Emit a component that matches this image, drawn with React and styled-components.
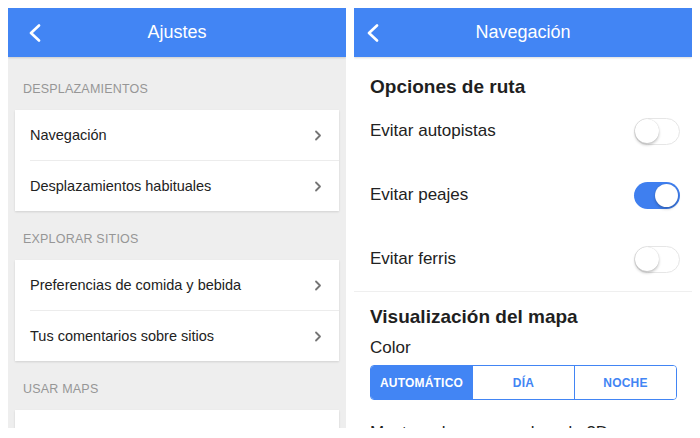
import React from "react"
import styled, { createGlobalStyle } from "styled-components"

const GlobalStyle = createGlobalStyle`
    html, body {
        margin: 0;
        padding: 0;
        background: #ffffff;
        font-family: "Liberation Sans", Arial, sans-serif;
    }
`

const Page = styled.div`
    display: flex;
    gap: 8px;
    padding: 8px;
    width: 700px;
    height: 438px;
    box-sizing: border-box;
`

const Panel = styled.div`
    flex: 1;
    height: 420px;
    display: flex;
    flex-direction: column;
    overflow: hidden;
    background: ${(props) => props.bg};
`

const Header = styled.div`
    position: relative;
    height: 49px;
    flex-shrink: 0;
    background: #4285f4;
    display: flex;
    align-items: center;
    justify-content: center;
    color: #ffffff;
    font-size: 18px;
    box-shadow: 0 1px 2px rgba(0, 0, 0, 0.15);
    z-index: 1;
`

const BackButton = styled.svg`
    position: absolute;
    left: ${(props) => props.left}px;
    top: 16px;
`

const SectionLabel = styled.div`
    padding: ${(props) => (props.first ? "24px" : "20px")} 15px 13px;
    font-size: 12.5px;
    line-height: 16px;
    letter-spacing: 0.2px;
    color: #969696;
`

const Card = styled.div`
    margin: 0 7px;
    background: #ffffff;
    box-shadow: 0 1px 2px rgba(0, 0, 0, 0.12);
    flex-shrink: 0;
`

const CardRow = styled.div`
    height: 50px;
    display: flex;
    align-items: center;
    justify-content: space-between;
    padding: 0 17px 0 15px;
    font-size: 14.5px;
    color: #222222;
    border-top: ${(props) => (props.divider ? "1px solid #ececec" : "none")};
    margin-left: ${(props) => (props.divider ? "15px" : "0")};
    padding-left: ${(props) => (props.divider ? "0" : "15px")};
`

const Content = styled.div`
    display: flex;
    flex-direction: column;
`

const GroupTitle = styled.div`
    padding: ${(props) => props.pad} 16px 0;
    font-size: 19px;
    line-height: 24px;
    font-weight: bold;
    color: #1f1f1f;
`

const SwitchRow = styled.div`
    height: 64px;
    display: flex;
    align-items: center;
    justify-content: space-between;
    padding: 0 12px 0 16px;
    font-size: 17px;
    color: #222222;
`

const Track = styled.div`
    position: relative;
    width: 46px;
    height: 27px;
    border-radius: 14px;
    box-sizing: border-box;
    background: ${(props) => (props.on ? "#3f7fef" : "#ffffff")};
    border: ${(props) => (props.on ? "none" : "1.5px solid #e6e6e6")};
`

const Knob = styled.div`
    position: absolute;
    top: ${(props) => (props.on ? "2px" : "0")};
    left: ${(props) => (props.on ? "21px" : "0")};
    width: ${(props) => (props.on ? "23px" : "24px")};
    height: ${(props) => (props.on ? "23px" : "24px")};
    border-radius: 50%;
    background: #ffffff;
    box-shadow: 0 2px 3px rgba(0, 0, 0, 0.22), 0 0 1px rgba(0, 0, 0, 0.2);
`

const Divider = styled.div`
    height: 1px;
    background: #efefef;
`

const Label = styled.div`
    padding: ${(props) => props.pad} 16px 0;
    font-size: 17px;
    line-height: 22px;
    color: #222222;
`

const Segmented = styled.div`
    display: flex;
    margin: 6px 15px 0 16px;
    height: 35px;
    border: 1px solid #4285f4;
    border-radius: 4px;
    overflow: hidden;
    box-sizing: border-box;
`

const Segment = styled.div`
    flex: 1;
    display: flex;
    align-items: center;
    justify-content: center;
    font-size: 12px;
    font-weight: bold;
    letter-spacing: 0.2px;
    color: ${(props) => (props.active ? "#ffffff" : "#4285f4")};
    background: ${(props) => (props.active ? "#4285f4" : "#ffffff")};
    & + & {
        border-left: 1px solid #4285f4;
    }
`

const Back = ({ left }) => (
    <BackButton left={left} width="14" height="18" viewBox="0 0 14 18">
        <path d="M11 1.5 L3 9 L11 16.5" fill="none" stroke="#ffffff" strokeWidth="2.6" strokeLinecap="round" strokeLinejoin="round" />
    </BackButton>
)

const Chevron = () => (
    <svg width="8" height="11" viewBox="0 0 8 11">
        <path d="M2 1.5 L6 5.5 L2 9.5" fill="none" stroke="#757575" strokeWidth="1.8" strokeLinecap="round" strokeLinejoin="round" />
    </svg>
)

const Switch = ({ on }) => (
    <Track on={on}>
        <Knob on={on} />
    </Track>
)

const sections = [
    { title: "DESPLAZAMIENTOS", items: ["Navegación", "Desplazamientos habituales"] },
    { title: "EXPLORAR SITIOS", items: ["Preferencias de comida y bebida", "Tus comentarios sobre sitios"] },
    { title: "USAR MAPS", items: ["Unidades de distancia", "Mostrar escala en el mapa"] },
]

const routeOptions = [
    { label: "Evitar autopistas", on: false },
    { label: "Evitar peajes", on: true },
    { label: "Evitar ferris", on: false },
]

const App = () => {
    return (
        <Page>
            <GlobalStyle />
            <Panel bg="#eeeeee">
                <Header>
                    <Back left={20} />
                    Ajustes
                </Header>
                {sections.map((section, i) => (
                    <React.Fragment key={section.title}>
                        <SectionLabel first={i === 0}>{section.title}</SectionLabel>
                        <Card>
                            {section.items.map((item, j) => (
                                <CardRow key={item} divider={j > 0}>
                                    {item}
                                    <Chevron />
                                </CardRow>
                            ))}
                        </Card>
                    </React.Fragment>
                ))}
            </Panel>
            <Panel bg="#ffffff">
                <Header>
                    <Back left={12} />
                    Navegación
                </Header>
                <Content>
                    <GroupTitle pad="18px">Opciones de ruta</GroupTitle>
                    {routeOptions.map((opt) => (
                        <SwitchRow key={opt.label}>
                            {opt.label}
                            <Switch on={opt.on} />
                        </SwitchRow>
                    ))}
                    <Divider />
                    <GroupTitle pad="13px">Visualización del mapa</GroupTitle>
                    <Label pad="8px">Color</Label>
                    <Segmented>
                        <Segment active>AUTOMÁTICO</Segment>
                        <Segment>DÍA</Segment>
                        <Segment>NOCHE</Segment>
                    </Segmented>
                    <Label pad="22px">Mostrar el mapa en el modo 3D</Label>
                </Content>
            </Panel>
        </Page>
    )
}

export default App
